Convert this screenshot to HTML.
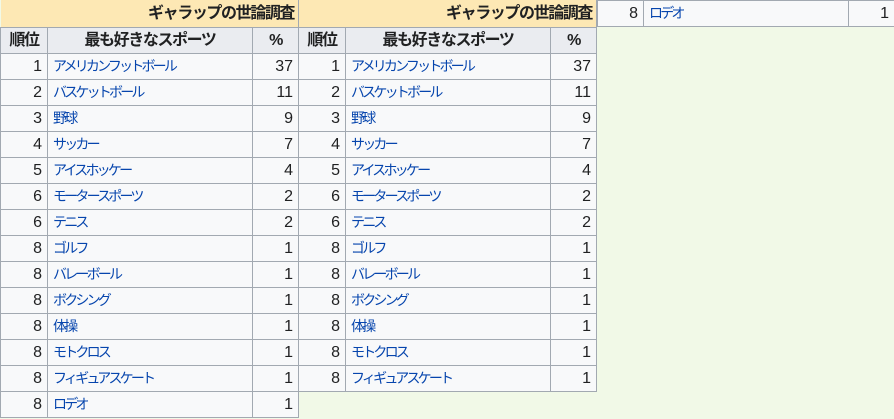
<html><head><style>
body{margin:0;width:894px;height:419px;background:#f1f9e7;font-family:"Liberation Sans","Noto Sans CJK JP",sans-serif;font-size:14px;overflow:hidden;position:relative}
table{position:absolute;top:0;border-collapse:collapse;table-layout:fixed}
td,th{border:1px solid #a2a9b1;background:#f8f9fa;height:25px;padding:0 5px;line-height:25px;white-space:nowrap;color:#202122}
th{background:#eaecf0;font-weight:bold;text-align:center;height:26px;letter-spacing:-1.4px}
td.n{text-align:right}
td a{color:#0645ad;text-decoration:none;font-size:14px;letter-spacing:-2.8px}
.cap th{background:#fde8b4;text-align:right;border-top:none;padding-right:4px;height:27px}
</style></head><body>
<table style="left:0;width:298px"><colgroup><col style="width:47px"><col style="width:205px"><col style="width:46px"></colgroup>
<tr class="cap"><th colspan="3" style="border-left:none">ギャラップの世論調査</th></tr>
<tr><th>順位</th><th>最も好きなスポーツ</th><th>%</th></tr>
<tr><td class="n">1</td><td><a>アメリカンフットボール</a></td><td class="n">37</td></tr>
<tr><td class="n">2</td><td><a>バスケットボール</a></td><td class="n">11</td></tr>
<tr><td class="n">3</td><td><a>野球</a></td><td class="n">9</td></tr>
<tr><td class="n">4</td><td><a>サッカー</a></td><td class="n">7</td></tr>
<tr><td class="n">5</td><td><a>アイスホッケー</a></td><td class="n">4</td></tr>
<tr><td class="n">6</td><td><a>モータースポーツ</a></td><td class="n">2</td></tr>
<tr><td class="n">6</td><td><a>テニス</a></td><td class="n">2</td></tr>
<tr><td class="n">8</td><td><a>ゴルフ</a></td><td class="n">1</td></tr>
<tr><td class="n">8</td><td><a>バレーボール</a></td><td class="n">1</td></tr>
<tr><td class="n">8</td><td><a>ボクシング</a></td><td class="n">1</td></tr>
<tr><td class="n">8</td><td><a>体操</a></td><td class="n">1</td></tr>
<tr><td class="n">8</td><td><a>モトクロス</a></td><td class="n">1</td></tr>
<tr><td class="n">8</td><td><a>フィギュアスケート</a></td><td class="n">1</td></tr>
<tr><td class="n">8</td><td><a>ロデオ</a></td><td class="n">1</td></tr>
</table>
<table style="left:298px;width:298px"><colgroup><col style="width:47px"><col style="width:205px"><col style="width:46px"></colgroup>
<tr class="cap"><th colspan="3">ギャラップの世論調査</th></tr>
<tr><th>順位</th><th>最も好きなスポーツ</th><th>%</th></tr>
<tr><td class="n">1</td><td><a>アメリカンフットボール</a></td><td class="n">37</td></tr>
<tr><td class="n">2</td><td><a>バスケットボール</a></td><td class="n">11</td></tr>
<tr><td class="n">3</td><td><a>野球</a></td><td class="n">9</td></tr>
<tr><td class="n">4</td><td><a>サッカー</a></td><td class="n">7</td></tr>
<tr><td class="n">5</td><td><a>アイスホッケー</a></td><td class="n">4</td></tr>
<tr><td class="n">6</td><td><a>モータースポーツ</a></td><td class="n">2</td></tr>
<tr><td class="n">6</td><td><a>テニス</a></td><td class="n">2</td></tr>
<tr><td class="n">8</td><td><a>ゴルフ</a></td><td class="n">1</td></tr>
<tr><td class="n">8</td><td><a>バレーボール</a></td><td class="n">1</td></tr>
<tr><td class="n">8</td><td><a>ボクシング</a></td><td class="n">1</td></tr>
<tr><td class="n">8</td><td><a>体操</a></td><td class="n">1</td></tr>
<tr><td class="n">8</td><td><a>モトクロス</a></td><td class="n">1</td></tr>
<tr><td class="n">8</td><td><a>フィギュアスケート</a></td><td class="n">1</td></tr>
</table>
<table style="left:597px;width:297px"><colgroup><col style="width:46px"><col style="width:205px"><col style="width:46px"></colgroup>
<tr><td class="n">8</td><td><a>ロデオ</a></td><td class="n">1</td></tr>
</table>
</body></html>
